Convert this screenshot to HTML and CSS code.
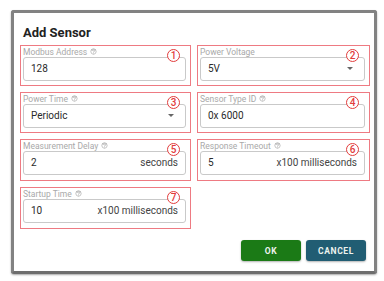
FILE: index.html
```html
<!DOCTYPE html>
<html lang="en">
  <head>
    <title>Add Sensor</title>
    <meta charset="UTF-8">
    <link rel="stylesheet" href="styles.css">
  </head>
  <body>
    <div class="dialog">
        <h2 class="title">Add Sensor</h2>
        <div class="grid">
            <div class="field">
                <span class="mark">1</span>
                <div class="label">Modbus Address <svg class="help" viewBox="0 0 24 24"><path d="M11 18h2v-2h-2v2zm1-16C6.48 2 2 6.48 2 12s4.48 10 10 10 10-4.48 10-10S17.52 2 12 2zm0 18c-4.41 0-8-3.59-8-8s3.59-8 8-8 8 3.59 8 8-3.59 8-8 8zm0-14c-2.21 0-4 1.79-4 4h2c0-1.1.9-2 2-2s2 .9 2 2c0 2-3 1.75-3 5h2c0-2.25 3-2.5 3-5 0-2.21-1.79-4-4-4z"/></svg></div>
                <div class="input"><span>128</span></div>
            </div>
            <div class="field">
                <span class="mark">2</span>
                <div class="label">Power Voltage</div>
                <div class="input"><span>5V</span><i class="arrow"></i></div>
            </div>
            <div class="field">
                <span class="mark">3</span>
                <div class="label">Power Time <svg class="help" viewBox="0 0 24 24"><path d="M11 18h2v-2h-2v2zm1-16C6.48 2 2 6.48 2 12s4.48 10 10 10 10-4.48 10-10S17.52 2 12 2zm0 18c-4.41 0-8-3.59-8-8s3.59-8 8-8 8 3.59 8 8-3.59 8-8 8zm0-14c-2.21 0-4 1.79-4 4h2c0-1.1.9-2 2-2s2 .9 2 2c0 2-3 1.75-3 5h2c0-2.25 3-2.5 3-5 0-2.21-1.79-4-4-4z"/></svg></div>
                <div class="input"><span>Periodic</span><i class="arrow"></i></div>
            </div>
            <div class="field">
                <span class="mark">4</span>
                <div class="label">Sensor Type ID <svg class="help" viewBox="0 0 24 24"><path d="M11 18h2v-2h-2v2zm1-16C6.48 2 2 6.48 2 12s4.48 10 10 10 10-4.48 10-10S17.52 2 12 2zm0 18c-4.41 0-8-3.59-8-8s3.59-8 8-8 8 3.59 8 8-3.59 8-8 8zm0-14c-2.21 0-4 1.79-4 4h2c0-1.1.9-2 2-2s2 .9 2 2c0 2-3 1.75-3 5h2c0-2.25 3-2.5 3-5 0-2.21-1.79-4-4-4z"/></svg></div>
                <div class="input"><span>0x 6000</span></div>
            </div>
            <div class="field">
                <span class="mark">5</span>
                <div class="label">Measurement Delay <svg class="help" viewBox="0 0 24 24"><path d="M11 18h2v-2h-2v2zm1-16C6.48 2 2 6.48 2 12s4.48 10 10 10 10-4.48 10-10S17.52 2 12 2zm0 18c-4.41 0-8-3.59-8-8s3.59-8 8-8 8 3.59 8 8-3.59 8-8 8zm0-14c-2.21 0-4 1.79-4 4h2c0-1.1.9-2 2-2s2 .9 2 2c0 2-3 1.75-3 5h2c0-2.25 3-2.5 3-5 0-2.21-1.79-4-4-4z"/></svg></div>
                <div class="input"><span>2</span><span class="unit">seconds</span></div>
            </div>
            <div class="field">
                <span class="mark">6</span>
                <div class="label">Response Timeout <svg class="help" viewBox="0 0 24 24"><path d="M11 18h2v-2h-2v2zm1-16C6.48 2 2 6.48 2 12s4.48 10 10 10 10-4.48 10-10S17.52 2 12 2zm0 18c-4.41 0-8-3.59-8-8s3.59-8 8-8 8 3.59 8 8-3.59 8-8 8zm0-14c-2.21 0-4 1.79-4 4h2c0-1.1.9-2 2-2s2 .9 2 2c0 2-3 1.75-3 5h2c0-2.25 3-2.5 3-5 0-2.21-1.79-4-4-4z"/></svg></div>
                <div class="input"><span>5</span><span class="unit">x100 milliseconds</span></div>
            </div>
            <div class="field">
                <span class="mark">7</span>
                <div class="label">Startup Time <svg class="help" viewBox="0 0 24 24"><path d="M11 18h2v-2h-2v2zm1-16C6.48 2 2 6.48 2 12s4.48 10 10 10 10-4.48 10-10S17.52 2 12 2zm0 18c-4.41 0-8-3.59-8-8s3.59-8 8-8 8 3.59 8 8-3.59 8-8 8zm0-14c-2.21 0-4 1.79-4 4h2c0-1.1.9-2 2-2s2 .9 2 2c0 2-3 1.75-3 5h2c0-2.25 3-2.5 3-5 0-2.21-1.79-4-4-4z"/></svg></div>
                <div class="input"><span>10</span><span class="unit">x100 milliseconds</span></div>
            </div>
        </div>
        <div class="actions">
            <button class="btn ok">OK</button>
            <button class="btn cancel">CANCEL</button>
        </div>
    </div>
  </body>
</html>
```

FILE: styles.css
```css
*{
    margin: 0;
    padding: 0;
    box-sizing: border-box;
}
html,body{width: 100%;height: 100%;}
body{
    background: #fff;
    font-family: Roboto, "Liberation Sans", sans-serif;
    color: #333;
    padding: 10px 0 0 11px;
}
.dialog{
    width: 366px;
    height: 264px;
    border: 3px solid #828282;
    border-bottom-color: #6e6e6e;
    border-radius: 3px;
    background: #fff;
    box-shadow: 0 1px 2px rgba(0,0,0,.35);
    padding: 12px 3px 0 6px;
}
.title{
    font-size: 13px;
    line-height: 16px;
    font-weight: 700;
    color: #222;
    padding-left: 3px;
    margin-bottom: 4px;
}
.grid{
    display: grid;
    grid-template-columns: 171px 173px;
    grid-template-rows: 41px 41px 42px 42px;
    column-gap: 6px;
    row-gap: 6px;
}
.field{
    position: relative;
    border: 1.5px solid #ee7a82;
    padding: 0.5px 4px 0 2px;
}
.mark{
    position: absolute;
    top: 3px;
    right: 10px;
    width: 13px;
    height: 13px;
    border: 1px solid #e23c3c;
    border-radius: 50%;
    font-size: 10px;
    line-height: 11px;
    text-align: center;
    font-weight: 500;
    color: #e23c3c;
    background: #fff;
}
.label{
    font-size: 8.5px;
    line-height: 10px;
    color: #a9a9a9;
    display: flex;
    align-items: center;
    gap: 3px;
}
.help{
    width: 7px;
    height: 7px;
    fill: #a0a0a0;
}
.input{
    height: 24px;
    border: 1px solid #c9c9c9;
    border-radius: 3px;
    display: flex;
    align-items: center;
    justify-content: space-between;
    padding: 0 7px 0 7px;
    font-size: 10px;
    color: #2a2a2a;
}
.unit{
    color: #444;
}
.arrow{
    width: 0;
    height: 0;
    border-left: 3px solid transparent;
    border-right: 3px solid transparent;
    border-top: 3px solid #666;
    margin-right: 4px;
}
.actions{
    display: flex;
    justify-content: flex-end;
    gap: 5px;
    margin-top: 11px;
    padding-right: 5px;
}
.btn{
    width: 60px;
    height: 21px;
    border: none;
    border-radius: 3px;
    font-family: Roboto, "Liberation Sans", sans-serif;
    font-weight: 700;
    font-size: 8.5px;
    letter-spacing: 0.6px;
    color: #eef3ee;
    box-shadow: 0 1px 2px rgba(0,0,0,.3);
}
.ok{background: #1b7a16;}
.cancel{background: #215d73;}
```
